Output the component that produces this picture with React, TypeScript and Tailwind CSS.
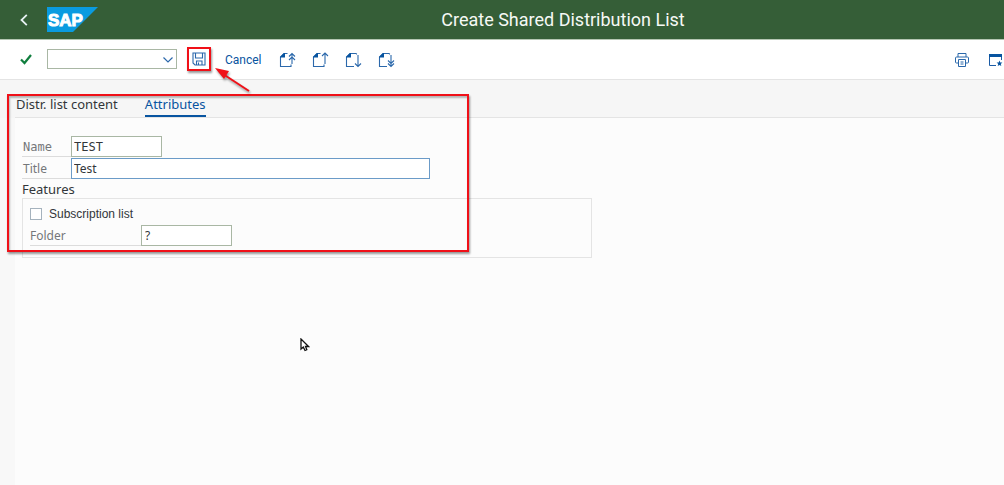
import type { ReactNode } from "react";

type PageMove = "first" | "previous" | "next" | "last";

const moveArrows: Record<PageMove, string> = {
  first: "M13 13V3M10 5.5l3-3 3 3M10 9l3-3 3 3",
  previous: "M13 13V2M10 5l3-3 3 3",
  next: "M13 4v11.5M10 12.5l3 3 3-3",
  last: "M13 4v11.5M10 9.5l3 3 3-3M10 12.5l3 3 3-3",
};

function PageIcon({ move }: { move: PageMove }) {
  const up = move === "first" || move === "previous";
  return (
    <svg viewBox="0 0 17 17" className="size-4.25" fill="none" stroke="#2b68ab" strokeWidth="1.1">
      <path d={up ? "M8.5 2.5H5L1.5 6v9.5h10.5v-2" : "M11.5 2.5H5L1.5 6v9.500h7.500M11.500 2.500v1"} />
      <path d="M6 2v4.500H1V6l4-4z" fill="#0854a0" stroke="none" />
      <path d={moveArrows[move]} />
    </svg>
  );
}

function SaveIcon() {
  return (
    <svg viewBox="0 0 14 14" className="size-3.5" fill="none" stroke="#2b68ab" strokeWidth="1.1">
      <path d="M1 1h12v12H3L1 11z" />
      <path d="M3.5 1v5h7V1M4.5 13V9h5.500v4M6.500 10.500V13" />
    </svg>
  );
}

function PrintIcon() {
  return (
    <svg viewBox="0 0 14 14" className="size-3.5" fill="none" stroke="#2b68ab" strokeWidth="1">
      <path d="M3 4V.5h8V4M3 10H1.500Q.5 10 .5 9V5q0-1 1-1h11q1 0 1 1v4q0 1-1 1H11" />
      <path d="M3.500 6.500h7v7h-7zM5.500 9h3M5.500 11h3" />
    </svg>
  );
}

function NewWindowIcon() {
  return (
    <svg viewBox="0 0 14 14" className="size-3.5" fill="none" stroke="#1b5ba5" strokeWidth="1">
      <path d="M7 12.500H.5V1.500h12V7" />
      <path d="M0 1h13v3H0z" fill="#0854a0" stroke="none" />
      <path
        d="M10.500 7.500l.8 1.900 2.100.1-1.600 1.400.5 2.100-1.800-1.100L8.700 13l.5-2.100-1.600-1.400 2.100-.1z"
        fill="#0854a0"
        stroke="none"
      />
    </svg>
  );
}

function SapLogo() {
  return (
    <svg viewBox="0 0 51 25" className="h-6.25 w-12.75" role="img" aria-label="SAP">
      <path d="M0 0h51L26 25H0z" fill="#0a9be0" />
      <text
        x="1"
        y="18.500"
        fill="#fff"
        stroke="#fff"
        strokeWidth="1"
        fontFamily="Liberation Sans, Arial, sans-serif"
        fontWeight="700"
        fontSize="17"
      >
        SAP
      </text>
    </svg>
  );
}

function IconButton({ label, children }: { label: string; children: ReactNode }) {
  return (
    <button type="button" aria-label={label} className="flex size-6 items-center justify-center">
      {children}
    </button>
  );
}

export default function App() {
  return (
    <div className="relative flex min-h-screen flex-col overflow-hidden bg-[#f8f8f8] font-['Noto_Sans',sans-serif] text-xs text-[#32363a]">
      <header className="flex h-10 items-center border-b border-[#b4c6b2] bg-[#355e37] pl-4">
        <button type="button" aria-label="Back" className="flex h-6 w-4 items-center justify-center">
          <svg viewBox="0 0 8 12" className="h-3 w-2" fill="none" stroke="#e8f2f4" strokeWidth="1.800">
            <path d="M6.800.8L1.500 6l5.300 5.200" />
          </svg>
        </button>
        <div className="ml-3.75 shrink-0">
          <SapLogo />
        </div>
        <h1 className="flex-1 pl-6 text-center font-['Roboto',sans-serif] text-[18px] text-[#f6f9f5]">
          Create Shared Distribution List
        </h1>
      </header>

      <div className="flex h-10 items-center border-b border-[#e4e4e4] bg-white pb-px pl-4.5 font-['Roboto',sans-serif]">
        <button type="button" aria-label="Accept" className="flex size-4 items-center justify-center">
          <svg viewBox="0 0 12 11" className="h-2.75 w-3" fill="none" stroke="#107e3e" strokeWidth="2.200">
            <path d="M1 5.500L4.500 9 11 1" />
          </svg>
        </button>
        <div className="relative ml-3.25 pb-px">
          <select
            aria-label="Transaction"
            className="block h-5 w-32.5 appearance-none border border-[#a9b7a4] bg-white"
          />
          <svg
            viewBox="0 0 10 6"
            className="pointer-events-none absolute top-2 right-1 h-1.5 w-2.5"
            fill="none"
            stroke="#2b68ab"
            strokeWidth="1.200"
          >
            <path d="M.5.5L5 5 9.500.5" />
          </svg>
        </div>
        <div className="relative ml-2.5">
          <IconButton label="Save">
            <SaveIcon />
          </IconButton>
          <div className="pointer-events-none absolute inset-0 border-2 border-[#f01018] shadow-[1px_2px_2px_#0006]" />
        </div>
        <button type="button" className="ml-3.5 pt-px text-[12px] text-[#0854a0]">
          Cancel
        </button>
        <div className="ml-3.5 flex gap-2.25">
          <IconButton label="First page">
            <PageIcon move="first" />
          </IconButton>
          <IconButton label="Previous page">
            <PageIcon move="previous" />
          </IconButton>
          <IconButton label="Next page">
            <PageIcon move="next" />
          </IconButton>
          <IconButton label="Last page">
            <PageIcon move="last" />
          </IconButton>
        </div>
        <div className="-mr-1 ml-auto flex gap-2.5 pt-px">
          <IconButton label="Print">
            <PrintIcon />
          </IconButton>
          <IconButton label="New window">
            <NewWindowIcon />
          </IconButton>
        </div>
      </div>

      <nav role="tablist" aria-label="Sections" className="flex h-9.5 items-end bg-[#f6f6f6] pl-3.75 text-[13px] leading-4">
        <div className="flex h-full flex-1 items-end gap-6.5 border-b border-[#e4e4e4]">
          <button
            type="button"
            role="tab"
            aria-selected="false"
            className="border-b-2 border-transparent px-px pb-0.75 whitespace-nowrap"
          >
            Distr. list content
          </button>
          <button
            type="button"
            role="tab"
            aria-selected="true"
            className="border-b-2 border-[#0854a0] pb-0.75 text-[#0854a0]"
          >
            Attributes
          </button>
        </div>
      </nav>

      <main className="ml-3.75 flex-1 bg-[#fcfcfc] pt-4.5 pl-1.75">
        <form className="w-142.5">
          <div className="flex h-5.25">
            <label
              htmlFor="name"
              className="w-12.25 border-b border-[#dcdcdc] pl-px font-['DejaVu_Sans_Mono',monospace] leading-5.5 text-[#74777a]"
            >
              Name
            </label>
            <input
              id="name"
              defaultValue="TEST"
              className="w-22.75 border border-[#a9b7a4] bg-white px-0.5 font-['DejaVu_Sans_Mono',monospace] outline-none"
            />
          </div>
          <div className="mt-px flex h-5.25">
            <label htmlFor="title" className="w-12.25 border-b border-[#dcdcdc] pl-px leading-5.5 text-[#74777a]">
              Title
            </label>
            <input
              id="title"
              defaultValue="Test"
              className="w-89.75 border border-[#6b9bc8] bg-white px-0.5 outline-none"
            />
          </div>
          <fieldset>
            <legend className="h-4.75 text-[13px] leading-5">Features</legend>
            <div className="h-15 border border-[#e4e4e4] px-1.75 pt-1.25">
              <label className="flex h-5 items-center gap-1.75 font-['Liberation_Sans',sans-serif]">
                <input type="checkbox" className="size-3 appearance-none border border-[#a5b2bd] bg-white" />
                Subscription list
              </label>
              <div className="mt-px flex h-5.25">
                <label htmlFor="folder" className="w-27.75 border-b border-[#dcdcdc] leading-5.5 text-[#74777a]">
                  Folder
                </label>
                <input
                  id="folder"
                  defaultValue="?"
                  className="w-22.75 border border-[#a9b7a4] bg-white px-0.75 outline-none"
                />
              </div>
            </div>
          </fieldset>
        </form>
      </main>

      <div className="pointer-events-none absolute top-23.5 left-1.75 h-39.5 w-115.5 border-2 border-[#f01018] shadow-[1px_2px_2px_#0006,inset_1px_2px_2px_#0004]" />
      <svg
        viewBox="0 0 38 28"
        className="pointer-events-none absolute top-16.5 left-53.5 h-7 w-9.5 drop-shadow-[1px_2px_1px_#0006]"
      >
        <path d="M9 8l26 17" stroke="#f01018" strokeWidth="2" />
        <path d="M1 2l14 3-5 8z" fill="#f01018" />
      </svg>
      <svg viewBox="0 0 10 14" className="pointer-events-none absolute top-84.5 left-75 h-3.5 w-2.5">
        <path d="M1 1v10l2.300-2 1.700 3.500 1.800-.8L5.500 8.500H8.500z" fill="#fff" stroke="#111" strokeWidth="1.300" />
      </svg>
    </div>
  );
}
